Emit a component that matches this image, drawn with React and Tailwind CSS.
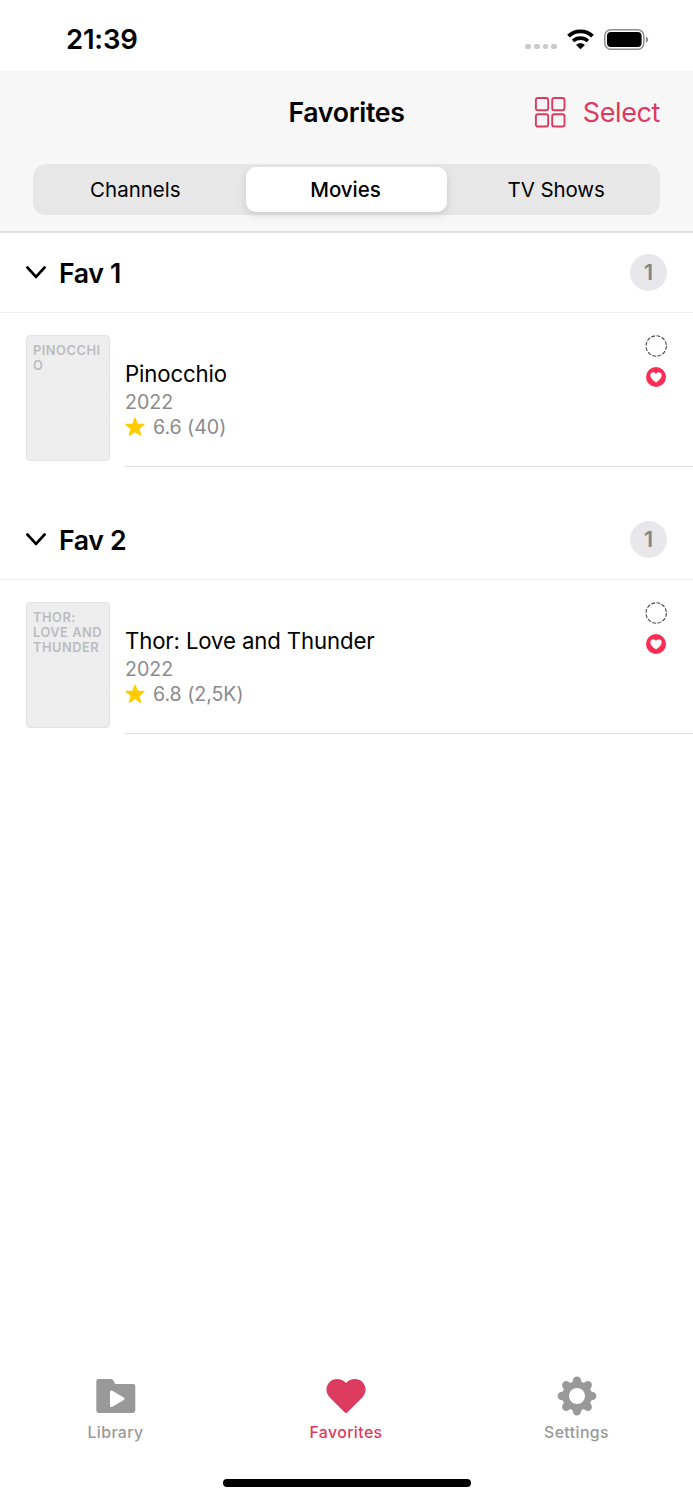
import { useState } from 'react'

const TABS = [
  { label: 'Channels', className: 'tracking-[0px] pr-[3px]' },
  { label: 'Movies', className: 'tracking-[-0.05px] pr-[2px]' },
  { label: 'TV Shows', className: 'tracking-[-0.1px]' },
]

const SECTIONS = [
  {
    title: 'Fav 1',
    items: [{ title: 'Pinocchio', year: '2022', rating: '6.6', votes: '40' }],
  },
  {
    title: 'Fav 2',
    items: [{ title: 'Thor: Love and Thunder', year: '2022', rating: '6.8', votes: '2,5K' }],
  },
]

const WifiIcon = () => (
  <svg width="27" height="21" viewBox="0 0 27 21" fill="none" stroke="#000" strokeWidth="3.8">
    <path d="M1.5 7.2C8 .8 19 .8 25.5 7.2" />
    <path d="M6.1 12C10 8.2 17 8.2 20.9 12" strokeWidth="3.6" />
    <path d="M9.1 15.9C11.5 13.7 15.5 13.7 17.9 15.9L13.5 20.3Z" fill="#000" stroke="none" />
  </svg>
)

const BatteryIcon = () => (
  <svg width="45" height="21" viewBox="0 0 45 21" fill="none">
    <rect x="0.8" y="0.8" width="39" height="19.4" rx="6" stroke="#8e8e8a" strokeWidth="1.5" />
    <rect x="3" y="3" width="34.6" height="15" rx="4" fill="#000" />
    <path d="M41.8 7.2C44.9 8.6 44.9 12.4 41.8 13.8Z" fill="#8e8e8e" />
  </svg>
)

const GridIcon = () => (
  <svg width="32" height="32" viewBox="0 0 32 32" fill="none" stroke="#dd3a60" strokeWidth="1.9">
    <rect x="1.9" y="0.95" width="12.3" height="12.3" rx="2" />
    <rect x="18.2" y="0.95" width="12.3" height="12.3" rx="2" />
    <rect x="1.9" y="17.25" width="12.3" height="12.3" rx="2" />
    <rect x="18.2" y="17.25" width="12.3" height="12.3" rx="2" />
  </svg>
)

const ChevronIcon = () => (
  <svg width="20" height="13" viewBox="0 0 20 13" fill="none" stroke="#000" strokeWidth="2.8" strokeLinecap="round" strokeLinejoin="round">
    <path d="M1.5 1.6L10 10.9L18.5 1.6" />
  </svg>
)

const StarIcon = () => (
  <svg width="20" height="20" viewBox="0 0 20 20" fill="#ffcc00" stroke="#ffcc00" strokeWidth="1.4" strokeLinejoin="round">
    <path d="M10 1.2L12.2 7.3L18.9 7.5L13.7 11.7L15.6 18.1L10 14.5L4.4 18.1L6.3 11.7L1.1 7.5L7.8 7.3Z" />
  </svg>
)

const DashedCircle = () => (
  <svg width="22" height="22" viewBox="0 0 22 22" fill="none">
    <circle cx="11.2" cy="11" r="10.2" stroke="#484848" strokeWidth="1.1" strokeDasharray="3.9 1.44" />
  </svg>
)

const HeartBadge = () => (
  <svg width="20" height="20" viewBox="0 0 20 20">
    <circle cx="10" cy="10" r="10" fill="#fc2d55" />
    <path d="M10 15.6C6.7 13.1 4.3 10.9 4.3 8.3C4.3 6.5 5.6 5.2 7.2 5.2C8.5 5.2 9.5 5.9 10 7C10.5 5.9 11.5 5.2 12.8 5.2C14.4 5.2 15.7 6.5 15.7 8.3C15.7 10.9 13.3 13.1 10 15.6Z" fill="#fff" />
  </svg>
)

const LibraryIcon = () => (
  <svg width="40" height="40" viewBox="0 0 40 40">
    <path d="M2.5 3H15.2Q16.8 3 17.5 4.5L19.2 8H37Q39.3 8 39.3 10.2V34.5Q39.3 36.9 37 36.9H2.5Q.3 36.9 .3 34.5V5.2Q.3 3 2.5 3Z" fill="#999" />
    <path d="M15.5 16.1V29.5L27 22.8Z" fill="#fff" stroke="#fff" strokeWidth="3" strokeLinejoin="round" />
  </svg>
)

const HeartIcon = () => (
  <svg width="40" height="40" viewBox="0 0 40 40" fill="#dd3a60">
    <path d="M20 37C19.3 37 18.8 36.5 18.3 36L3.7 21.4C-.9 16.8-.3 9.5 3.7 5.9C8 2 15.5 1.9 20 7.1C24.5 1.9 32 2 36.3 5.9C40.3 9.5 40.9 16.8 36.3 21.4L21.7 36C21.2 36.5 20.7 37 20 37Z" />
  </svg>
)

const SettingsIcon = () => (
  <svg width="40" height="40" viewBox="0 0 40 40">
    <g fill="#999">
      <circle cx="20" cy="20" r="14.4" />
      {[0, 45, 90, 135, 180, 225, 270, 315].map((angle) => (
        <path key={angle} d="M13.6 7Q15.4 7 15.8 4.8C16.2 2 17.8 .6 20 .6C22.2 .6 23.8 2 24.2 4.8Q24.6 7 26.4 7L20 14Z" transform={`rotate(${angle} 20 20)`} />
      ))}
    </g>
    <circle cx="20" cy="20" r="8" fill="#fff" />
  </svg>
)

const StatusBar = () => (
  <div className="flex h-[71px] items-start justify-between pl-[66px] pr-[44px]">
    <span className="mt-[22px] text-[27.5px] leading-[34px] font-semibold tracking-[-0.2px]">21:39</span>
    <div className="mt-[29px] flex items-start">
      <div className="mt-[14.5px] mr-[10px] flex gap-[3px]">
        {[0, 1, 2, 3].map((dot) => (
          <span key={dot} className="h-[5.5px] w-[5.7px] rounded-[2px] bg-[#cacaca]" />
        ))}
      </div>
      <WifiIcon />
      <span className="ml-[10px]">
        <BatteryIcon />
      </span>
    </div>
  </div>
)

const Header = ({ active, onChange }) => (
  <header className="flex h-[162px] flex-col border-b-2 border-[#dfdfdf] bg-[#f7f7f7] px-[33px]">
    <div className="grid h-[93px] grid-cols-3 items-start pt-[25px]">
      <span />
      <h1 className="text-center text-[26.7px] leading-8 font-semibold tracking-[-0.3px]">Favorites</h1>
      <div className="flex items-start justify-end gap-[17px] text-[#dd3a60]">
        <span className="pt-px">
          <GridIcon />
        </span>
        <button type="button" className="pt-px text-[27px] leading-8 tracking-[-0.4px]">Select</button>
      </div>
    </div>
    <div className="grid h-[51px] grid-cols-3 gap-[8px] rounded-[13px] bg-[#e7e7e7] p-[3px]">
      {TABS.map((tab) => (
        <button
          key={tab.label}
          type="button"
          onClick={() => onChange(tab.label)}
          className={`h-[45px] rounded-[10px] pt-px text-[20.5px] ${tab.className} ${active === tab.label ? 'bg-white font-medium shadow-[0_3px_8px_rgba(0,0,0,0.12)]' : 'font-normal'}`}
        >
          {tab.label}
        </button>
      ))}
    </div>
  </header>
)

const MovieRow = ({ movie }) => (
  <div className="flex h-[154px] pl-[26px]">
    <div className="mt-[22px] h-[126px] w-[84px] shrink-0 rounded-[4px] border border-[#e2e2e2] bg-[#eee] pt-[6.5px] pr-[5px] pl-[6px] text-[12.8px] leading-[15.4px] font-semibold tracking-[0.53px] break-words text-[#bcbcbe] uppercase">
      {movie.title}
    </div>
    <div className="ml-[15px] flex flex-1 justify-between border-b border-[#e0e0e0] pr-[26px]">
      <div className="pt-[46px]">
        <p className="text-[22.2px] leading-[29px] tracking-[-0.13px]">{movie.title}</p>
        <p className="pt-px text-[19.6px] leading-[27px] text-[#8b8b8e]">{movie.year}</p>
        <p className="flex items-center text-[19.6px] leading-[22px] tracking-[-0.05px] text-[#8b8b8e]">
          <StarIcon />
          <span className="ml-[8px]">{movie.rating} ({movie.votes})</span>
        </p>
      </div>
      <div className="flex flex-col items-center gap-[10px] pt-[22px]">
        <DashedCircle />
        <HeartBadge />
      </div>
    </div>
  </div>
)

const Section = ({ section }) => (
  <section className="mb-[33px]">
    <div className="flex h-[80px] items-center border-b border-[#f1f1f1] px-[26px]">
      <ChevronIcon />
      <h2 className="ml-[13px] text-[26.7px] leading-8 font-semibold tracking-[-0.35px]">{section.title}</h2>
      <span className="ml-auto flex h-[37px] w-[37px] items-center justify-center rounded-full bg-[#e8e8ea] text-[21.5px] font-semibold text-[#858588]">
        {section.items.length}
      </span>
    </div>
    {section.items.map((movie) => (
      <MovieRow key={movie.title} movie={movie} />
    ))}
  </section>
)

const TabBar = () => (
  <nav className="grid h-[124px] grid-cols-3 text-[15.8px] leading-5 font-medium tracking-[0.42px] text-[#999]">
    <div className="flex flex-col items-center gap-[7px]">
      <LibraryIcon />
      <span>Library</span>
    </div>
    <div className="flex flex-col items-center gap-[7px] pr-px text-[#dd3a60]">
      <HeartIcon />
      <span>Favorites</span>
    </div>
    <div className="flex flex-col items-center gap-[7px] pr-[2px]">
      <SettingsIcon />
      <span>Settings</span>
    </div>
  </nav>
)

const App = () => {
  const [active, setActive] = useState('Movies')

  return (
    <div className="flex h-[1500px] w-[693px] flex-col overflow-hidden bg-white font-['Inter',sans-serif] text-black">
      <StatusBar />
      <Header active={active} onChange={setActive} />
      <main className="flex-1">
        {SECTIONS.map((section) => (
          <Section key={section.title} section={section} />
        ))}
      </main>
      <div className="relative">
        <TabBar />
        <div className="absolute bottom-[13px] left-[223px] h-[8px] w-[248px] rounded-full bg-black" />
      </div>
    </div>
  )
}

export default App
